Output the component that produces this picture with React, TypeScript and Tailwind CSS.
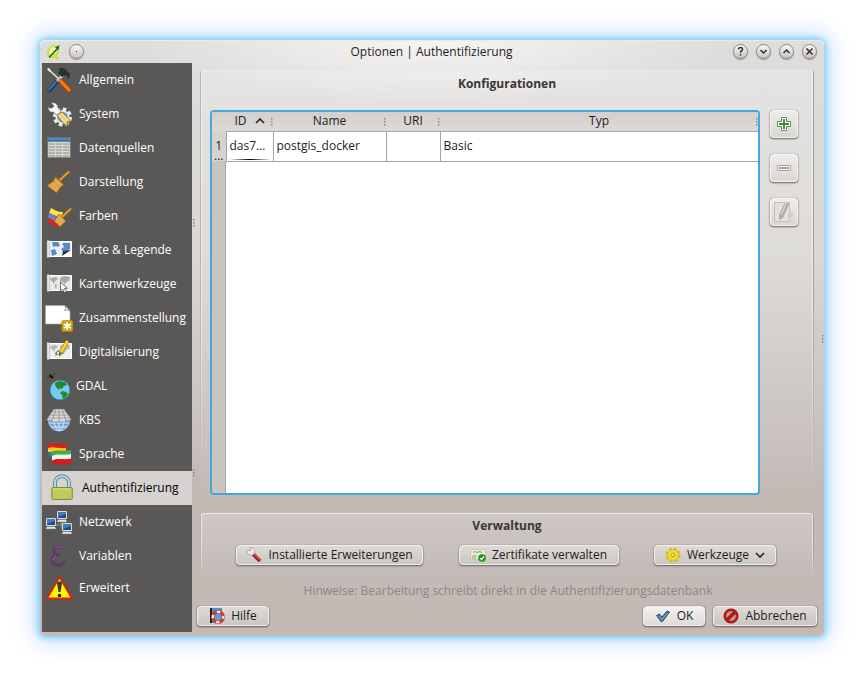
import type { ReactNode } from "react";
import clsx from "clsx";

type Section = {
  label: string;
  icon: ReactNode;
  width?: string;
  viewBox?: string;
};

const mapLand = "M6 8l5-1 2 2-3 2-1 3-2-3-2-1zM10 14l2 1-1 4-1-2zM15 8l4-2 6 1-1 4-3 1-1 3-2-3-3-1z";

function Sheet({ fill, land }: { fill: string; land: string }) {
  return (
    <>
      <path d="M4 5.5h22.5v15H4z" fill={fill} stroke="#fff" />
      <path d={mapLand} fill={land} />
      <path d="M2 4.5h2.5v17H2z" fill="#e8e8e8" stroke="#9a9a9a" strokeWidth=".5" />
    </>
  );
}

function Monitor({ x, y }: { x: number; y: number }) {
  return (
    <g transform={`translate(${x} ${y})`}>
      <path d="M.5.5h9v7h-9z" fill="#1f4b93" stroke="#d8dcd8" />
      <path d="M1 1h8v2L1 6z" fill="#4b78b9" />
      <path d="M1 8.5h8l1.2 2.6H-.2z" fill="#dfe2dc" stroke="#777" strokeWidth=".5" />
    </g>
  );
}

function Broom() {
  return (
    <>
      <path d="M15 12L23.5 4" stroke="#a86613" strokeWidth="3" strokeLinecap="round" />
      <path d="M15 12L23.5 4" stroke="#eaa74a" strokeWidth="1.6" strokeLinecap="round" />
      <path d="M10.5 9l8.5 8-2.5 1-5 7L2 17.5l6-4z" fill="#e0a045" stroke="#9b6216" strokeWidth=".8" />
      <path d="M10 12l6 6M7 15l6 6M4.5 17l7 6" stroke="#f3c47c" strokeWidth=".8" />
    </>
  );
}

const sections: Section[] = [
  {
    label: "Allgemein",
    icon: (
      <>
        <path d="M12 16L4.5 24" stroke="#1d3f73" strokeWidth="4.6" strokeLinecap="round" />
        <path d="M11 16L4 23.5" stroke="#4c7cbd" strokeWidth="1.5" strokeLinecap="round" />
        <path d="M3 3l12 11" stroke="#e4e4e4" strokeWidth="1.6" />
        <path d="M2 3l2-1 2 3-1 1z" fill="#fff" />
        <path d="M12 15l6-6" stroke="#c8c8c8" strokeWidth="3" />
        <path d="M13 3c4-2 7-1 9 2l3 3-1 5-2-2-1-2-4 2-4-4 2-2z" fill="#2b3030" />
        <path d="M16 15l8 9" stroke="#b54300" strokeWidth="4.8" strokeLinecap="round" />
        <path d="M15.5 15l8.500 9" stroke="#ff7d0c" strokeWidth="3" strokeLinecap="round" />
      </>
    ),
  },
  {
    label: "System",
    icon: (
      <>
        <circle cx="17.5" cy="17" r="8" fill="none" stroke="#eee" strokeWidth="3" strokeDasharray="3.6 2.683" />
        <circle cx="17.5" cy="17" r="6.2" fill="#6e96c8" stroke="#e8e8e8" strokeWidth="1.8" />
        <path d="M3 7c3 2 5 1 6-1L6 3c4-1 7 1 7 5l3 4-4 3-4-3c-3 1-5-2-5-5z" fill="#f5f5f5" stroke="#444" strokeWidth=".5" />
        <path d="M12 15l5-3 8 8-1 5-5-1z" fill="#ead37b" stroke="#8d7834" strokeWidth=".8" />
        <path d="M14 16l8 8M17 14l6 6" stroke="#fbeeb1" strokeWidth=".8" />
        <circle cx="22.8" cy="22.5" r=".9" fill="#594b20" />
      </>
    ),
  },
  {
    label: "Datenquellen",
    icon: (
      <>
        <path d="M2.8 3.5h22.5v20H2.8z" fill="#d5d8cf" stroke="#777" strokeWidth=".6" />
        <path d="M3 3.5h22v4.200H3z" fill="#3c69a6" />
        <path d="M3 5h22" stroke="#7ca0d1" />
        <path d="M4 10h20M4 13h20M4 16h20M4 19h20M4 22h20" stroke="#878b84" strokeWidth=".9" strokeDasharray="6 1" />
      </>
    ),
  },
  { label: "Darstellung", icon: <Broom /> },
  {
    label: "Farben",
    icon: (
      <>
        <path d="M6 6c4 2 6 4 12 4l-2 6L4 11z" fill="#ffe43b" />
        <path d="M4 11c5 1 6 5 12 4l-1 5C9 20 7 17 3 16z" fill="#5c86ce" />
        <path d="M3 16c4 1 7 4 12 3l-2 6C9 25 7 21 2 20z" fill="#e12423" />
        <path d="M17 15l8.500-8" stroke="#a86613" strokeWidth="2.8" strokeLinecap="round" />
        <path d="M17 15l8.500-8" stroke="#eaa74a" strokeWidth="1.4" strokeLinecap="round" />
        <path d="M14 12l7 7-6 6-6-6z" fill="#dfa04c" stroke="#9b6216" strokeWidth=".8" />
        <path d="M13 15l5 5M11 17l5 5" stroke="#f3c47c" strokeWidth=".8" />
      </>
    ),
  },
  {
    label: "Karte & Legende",
    icon: (
      <>
        <path d="M4 5.5h22.5v15H4z" fill="#e9eff5" stroke="#fff" />
        <path d="M7 6h6l2 3-2 2-2-1-3 1zM6 14l4-1 2 5-5 2zM17 7h8v6l-3 2-4 1-2-3 3-2z" fill="#5b88c4" />
        <path d="M26 14v6h-9z" fill="#fff" />
        <path d="M17 20l1-5 8-1z" fill="#30353a" />
        <path d="M2 4.5h2.500v17H2z" fill="#e8e8e8" stroke="#9a9a9a" strokeWidth=".5" />
      </>
    ),
  },
  {
    label: "Kartenwerkzeuge",
    icon: (
      <>
        <Sheet fill="#e9e9e4" land="#a9aaa5" />
        <path d="M15.5 12v9l2.200-2 1.800 4 1.800-.9-1.800-3.700h2.800z" fill="#fff" stroke="#333" strokeWidth=".7" />
      </>
    ),
  },
  {
    label: "Zusammenstellung",
    icon: (
      <>
        <path d="M.5 1.500H20l5 5V20H.500z" fill="#fff" stroke="#aaa" strokeWidth=".6" />
        <path d="M20 1.500c1 2 .5 3.500-.5 5 2-.8 4-.5 5.500.5z" fill="#eee" stroke="#666" strokeWidth=".6" />
        <rect x="16.8" y="16.5" width="11" height="11" rx="1.5" fill="#d1a50d" stroke="#a98508" strokeWidth=".6" />
        <path d="M22.300 18v8M18.800 20l7 4M25.800 20l-7 4" stroke="#fff" strokeWidth="1.5" />
      </>
    ),
  },
  {
    label: "Digitalisierung",
    icon: (
      <>
        <Sheet fill="#eeeeea" land="#b5b6b1" />
        <path d="M13 16c-2 2-3-2 0-3s3 3 6 2" fill="none" stroke="#555" />
        <path d="M15.500 15l7-12" stroke="#a58a0c" strokeWidth="4" />
        <path d="M16 14l6.500-11" stroke="#fad62f" strokeWidth="2.5" />
        <path d="M13.800 14l3.400 2-3.200 2.300z" fill="#555" />
      </>
    ),
  },
  {
    label: "GDAL",
    width: "w-[25px]",
    viewBox: "0 0 25 28",
    icon: (
      <>
        <path d="M6 5l3 9 5-4" fill="none" stroke="#bd3838" />
        <circle cx="15" cy="18" r="9.8" fill="#76c9ef" stroke="#3c8fb8" strokeWidth=".6" />
        <path d="M10 11l4-2 6 1 2 3-3 1-2 3-2-1-1 2-3-3-1-2zM17 19l4 1 2 2-3 4-2 1-1-4-2-2z" fill="#248a2c" />
        <path d="M1.500 7l3-2M8 3l3-2" stroke="#45484a" strokeWidth="2" />
        <path d="M4.500 3l3.500 3" stroke="#171717" strokeWidth="2.6" />
      </>
    ),
  },
  {
    label: "KBS",
    icon: (
      <>
        <circle cx="14" cy="14.5" r="10.5" fill="#6fa5dd" stroke="#bcdcf8" strokeWidth=".8" />
        <path d="M4 17h20M6 21h16M14 14v11M9 14c0 5 2 8 4 11M19 14c0 5-2 8-4 11" fill="none" stroke="#dff0ff" strokeWidth=".9" />
        <path d="M9 3h10l7.500 11-4 .5-3 1.500h-11l-3-1.500-4-.5z" fill="#d9dad8" stroke="#777" strokeWidth=".6" />
        <path d="M7.500 6h13M5.500 9h17M3.500 12h21M11 3L7 15M14 3v13M17 3l4 12" stroke="#83878b" strokeWidth=".7" />
      </>
    ),
  },
  {
    label: "Sprache",
    icon: (
      <>
        <path d="M2 4c7-2 11 1 20 0v5c-9 1-13-2-19 0z" fill="#df1d1d" />
        <path d="M3 8c6-2 9 1 18 0v4H3z" fill="#ffc928" />
        <path d="M3 12h8v5c-3-1-5-1-7 0z" fill="#3d69b2" />
        <path d="M6 12c7-3 12 0 20-2v5c-8 2-13-1-19 2z" fill="#3fb03a" />
        <path d="M7 16c6-3 11 0 19-2v5c-8 2-12-1-19 2z" fill="#f7f7f7" />
        <path d="M7 20.500c7-3 11 0 19-2V24c-8 2-12-1-19 1z" fill="#d61b1b" />
      </>
    ),
  },
  {
    label: "Authentifizierung",
    width: "w-[31px]",
    viewBox: "0 0 31 28",
    icon: (
      <>
        <path d="M10 15V9c0-9 14-9 14 0v6" fill="none" stroke="#658a9b" strokeWidth="4" />
        <path d="M10 15V9c0-9 14-9 14 0v6" fill="none" stroke="#bad8e4" strokeWidth="2" />
        <rect x="6.8" y="13.5" width="20.5" height="12" rx="1.5" fill="#bdcb5c" stroke="#828e2d" />
        <path d="M8 15h18" stroke="#d4df88" />
      </>
    ),
  },
  {
    label: "Netzwerk",
    icon: (
      <>
        <path d="M8 17h9v4M16 12v5" fill="none" stroke="#949494" />
        <Monitor x={12} y={3} />
        <Monitor x={1} y={10} />
        <Monitor x={17} y={15} />
      </>
    ),
  },
  {
    label: "Variablen",
    icon: (
      <>
        <path d="M19 8.500c-1-4.500-10-4.500-10 .5 0 3 2 4 6 4-5 0-8 2-8 5.500 0 6 10 6 13 1" fill="none" stroke="#5d3768" strokeWidth="2.8" />
        <path d="M18 6c-3-2-7-1-8 1M8 18c0-2 1-3 3-4" fill="none" stroke="#9b7aa5" strokeWidth=".8" />
        <circle cx="18.5" cy="8" r="1.8" fill="#6c4477" />
      </>
    ),
  },
  {
    label: "Erweitert",
    icon: (
      <>
        <path d="M14.500 3L27 24.500H2z" fill="#fff800" stroke="#df1f12" strokeWidth="1.8" strokeLinejoin="round" />
        <path d="M12 9c0-2 5-2 5 0l-1.500 9h-2z" fill="#3b3d35" />
        <circle cx="14.5" cy="21.5" r="1.7" fill="#111" />
      </>
    ),
  },
];

function Sidebar() {
  return (
    <nav className="w-[150px] shrink-0 bg-[#595856] text-white">
      {sections.map(({ label, icon, width = "w-[28px]", viewBox = "0 0 28 28" }, i) => (
        <button
          key={label}
          className={clsx(
            "flex w-full items-center gap-[6px] pl-[3px] text-left leading-[20px]",
            i === sections.length - 1 ? "h-[30px]" : "h-[34px]",
            label === "Authentifizierung" && "bg-[#d6d2cf] text-black",
          )}
        >
          <svg viewBox={viewBox} className={clsx("h-[28px] shrink-0", width)}>
            {icon}
          </svg>
          {label}
        </button>
      ))}
    </nav>
  );
}

function TitleButton({ label, children }: { label: string; children?: ReactNode }) {
  return (
    <button
      aria-label={label}
      className="grid size-[15px] place-items-center rounded-full border border-[#8d8a88] bg-linear-to-b from-[#f8f8f7] to-[#c8c4c1] shadow-[0_1px_1px_#9a9694]"
    >
      <svg viewBox="0 0 13 13" className="size-[13px]" fill="none" stroke="#333" strokeWidth="1.5">
        {children}
      </svg>
    </button>
  );
}

function TitleBar() {
  return (
    <header className="flex h-[22px] shrink-0 items-center pr-[7px] pb-px pl-1">
      <div className="flex flex-1 items-center gap-[7px]">
        <svg viewBox="0 0 16 16" className="size-4">
          <path d="M8 2C4 2 2 6 2 9c0 4 4 5 7 3s5-10-1-10z" fill="#f0f5b0" stroke="#cfdd45" strokeWidth="2.2" />
          <path d="M8 10c1 3 2 5 5 4" fill="none" stroke="#cfdd45" strokeWidth="2.2" />
          <path d="M3 13.500L12 4" stroke="#176b20" strokeWidth="1.6" />
          <path d="M9 3.500L13.500 1l-1 5z" fill="#176b20" />
        </svg>
        <TitleButton label="Menü">
          <path d="M6 6.500h1" strokeWidth="1" />
        </TitleButton>
      </div>
      <h1>Optionen | Authentifizierung</h1>
      <div className="flex flex-1 items-center justify-end gap-2">
        <TitleButton label="Hilfe">
          <path d="M4.500 4.500c0-3 4.500-2.500 4 0-.3 1.200-2 1.400-2 3.300M6.500 9v1.500" />
        </TitleButton>
        <TitleButton label="Minimieren">
          <path d="M3.500 5l3 3 3-3" />
        </TitleButton>
        <TitleButton label="Maximieren">
          <path d="M3.500 8l3-3 3 3" />
        </TitleButton>
        <TitleButton label="Schließen">
          <path d="M3.500 3.500l6 6m0-6l-6 6" />
        </TitleButton>
      </div>
    </header>
  );
}

function PushButton({ children, className }: { children: ReactNode; className?: string }) {
  return (
    <button
      className={clsx(
        "flex h-[20px] items-center justify-center gap-[6px] rounded-[4px] border border-[#f1efed] bg-linear-to-b from-[#dedbd7] to-[#cac6c0] text-[#1f1c1b] shadow-[0_1px_2px_#65605d,0_0_1px_#65605d]",
        className,
      )}
    >
      {children}
    </button>
  );
}

function ToolButton({ label, disabled, children }: { label: string; disabled?: boolean; children: ReactNode }) {
  return (
    <button
      aria-label={label}
      disabled={disabled}
      className="grid size-[28px] place-items-center rounded-[4px] border border-[#f7f6f5] bg-linear-to-b from-[#eeedec] to-[#dad6d2] shadow-[0_1px_2px_#65605d,0_0_1px_#65605d]"
    >
      <svg viewBox="0 0 20 20" className="size-[20px]" fill="none">
        {children}
      </svg>
    </button>
  );
}

function Grip({ className }: { className?: string }) {
  return (
    <svg viewBox="0 0 2 8" className={clsx("h-2 w-[2px]", className)} fill="#8b8683">
      <path d="M0 0h1.500v1.500H0zM0 3h1.500v1.500H0zM0 6h1.500v1.500H0z" />
    </svg>
  );
}

// group frame whose side edges fade out towards the bottom
function GroupBox({ title, className, children }: { title: string; className?: string; children: ReactNode }) {
  return (
    <section className={clsx("relative flex flex-col rounded-t-[5px] border-t border-[#eceae8] bg-linear-to-b from-white/20 to-transparent", className)}>
      <div className="absolute inset-y-0 left-0 w-px rounded-tl-[5px] bg-linear-to-b from-[#b5b0ad] via-[#b5b0ad] to-transparent" />
      <div className="absolute inset-y-0 left-px w-px bg-linear-to-b from-white/60 via-white/60 to-transparent" />
      <div className="absolute inset-y-0 right-0 w-px bg-linear-to-b from-[#a19b98] via-[#a19b98] to-transparent" />
      <div className="absolute inset-y-0 right-px w-px bg-linear-to-b from-white/60 via-white/60 to-transparent" />
      <h2 className="text-center font-bold text-[#3a3735]">{title}</h2>
      {children}
    </section>
  );
}

const columns = ["Name", "URI", "Typ"];

function ConfigTable() {
  return (
    <div className="flex flex-1 flex-col rounded-[4px] border-2 border-[#43a9dc] bg-linear-to-r from-[#c9c4c0] from-[14px] to-white to-[14px]">
      <table className="w-full table-fixed border-collapse">
        <colgroup>
          <col className="w-[14px]" />
          <col className="w-[47px]" />
          <col className="w-[113px]" />
          <col className="w-[54px]" />
          <col />
        </colgroup>
        <thead className="bg-linear-to-b from-[#d2cfcc] to-[#dcd9d6]">
          <tr className="h-[19px]">
            <th />
            <th className="relative font-normal">
              <span className="flex items-center justify-center gap-2">
                ID
                <svg viewBox="0 0 10 6" className="h-[6px] w-[10px]" fill="none" stroke="#222" strokeWidth="1.6">
                  <path d="M1 5l4-4 4 4" />
                </svg>
              </span>
              <Grip className="absolute top-[6px] right-0" />
            </th>
            {columns.map((name) => (
              <th key={name} className="relative font-normal">
                {name}
                <Grip className="absolute top-[6px] right-0" />
              </th>
            ))}
          </tr>
        </thead>
        <tbody>
          <tr className="h-[30px]">
            <th className="border-r border-[#aaa5a2] bg-[#d5d2cf] align-bottom leading-[10px] font-normal whitespace-pre-line">
              {"1\n…"}
            </th>
            <td className="relative border border-[#aaa5a2] bg-white px-[3px]">
              das7…
              <span className="absolute inset-x-[2px] bottom-px h-px bg-linear-to-r from-transparent via-black to-transparent" />
            </td>
            <td className="border border-[#aaa5a2] bg-white px-[3px]">postgis_docker</td>
            <td className="border border-[#aaa5a2] bg-white px-[3px]" />
            <td className="border-y border-[#aaa5a2] bg-white px-[3px]">Basic</td>
          </tr>
        </tbody>
      </table>
      <div className="ml-[13px] flex-1 border-l border-[#aaa5a2]" />
    </div>
  );
}

function Management() {
  return (
    <div className="mt-[10px] flex justify-between pr-[38px] pl-[36px]">
      <PushButton className="w-[187px]">
        <svg viewBox="0 0 16 16" className="size-4">
          <path d="M6 6l8 8" stroke="#9e1820" strokeWidth="3.5" />
          <path d="M7 6l7 7" stroke="#ea5154" strokeWidth="1.2" />
          <path d="M1 3l3 1 1-1-1-2c3-1 5 1 5 4L7 8C4 9 0 7 1 3z" fill="#e9ebe7" stroke="#888" strokeWidth=".6" />
        </svg>
        Installierte Erweiterungen
      </PushButton>
      <PushButton className="w-[160px]">
        <svg viewBox="0 0 16 16" className="size-4">
          <path d="M.5 2.500h15v10H.500z" fill="#e8ebd7" stroke="#afb39c" strokeWidth=".6" />
          <path d="M3 5.500l2-1 2 1 3-1 2 1M2 9h5M2 11h4" fill="none" stroke="#7d8273" strokeWidth=".8" />
          <circle cx="12" cy="11" r="3.8" fill="#139514" />
          <path d="M10 11l1.500 1.500L14 9.500" fill="none" stroke="#fff" strokeWidth="1.2" />
        </svg>
        Zertifikate verwalten
      </PushButton>
      <PushButton className="w-[122px]">
        <svg viewBox="0 0 16 16" className="size-4">
          <circle cx="8" cy="8" r="6" fill="none" stroke="#dabd14" strokeWidth="3" strokeDasharray="2.7 2.012" />
          <circle cx="8" cy="8" r="5.3" fill="#f4dc2d" stroke="#d5b80d" strokeWidth=".6" />
          <circle cx="8" cy="8" r="1.8" fill="#e2dfc8" stroke="#bfa217" />
        </svg>
        Werkzeuge
        <svg viewBox="0 0 10 6" className="h-[6px] w-[10px]" fill="none" stroke="#222" strokeWidth="1.6">
          <path d="M1 1l4 4 4-4" />
        </svg>
      </PushButton>
    </div>
  );
}

function Footer() {
  return (
    <footer className="mt-[6px] mb-[6px] flex items-center gap-2 pr-[7px] pl-[5px]">
      <PushButton className="mr-auto w-[72px]">
        <svg viewBox="0 0 16 16" className="size-4">
          <path d="M1 0h12v14l-2 1H1z" fill="#4b91d1" />
          <path d="M1 0h2v15H1z" fill="#202020" />
          <circle cx="9" cy="9" r="5.2" fill="#5b9bd6" stroke="#d03a28" strokeWidth="3.4" />
          <circle cx="9" cy="9" r="5.2" fill="none" stroke="#f8f4f0" strokeWidth="2.2" strokeDasharray="3.4 4.768" strokeDashoffset="1.7" />
        </svg>
        Hilfe
      </PushButton>
      <PushButton className="w-[62px] from-[#f3f2f1] to-[#dedbd7]">
        <svg viewBox="0 0 16 16" className="size-4">
          <path d="M1.500 7.500l3-1.500 2.500 3 5-6 2.500 1-7 9.500H6z" fill="#507ba3" stroke="#294a6b" />
          <path d="M3.500 8l3.500 3.500L12.500 5" fill="none" stroke="#83a9ca" />
        </svg>
        OK
      </PushButton>
      <PushButton className="w-[104px]">
        <svg viewBox="0 0 16 16" className="size-4">
          <circle cx="8" cy="8" r="6" fill="none" stroke="#8d0f0f" strokeWidth="3" />
          <circle cx="8" cy="8" r="5.8" fill="#b5a5a0" stroke="#c61b18" strokeWidth="2" />
          <path d="M4 12l8-8" stroke="#b01614" strokeWidth="3.4" />
        </svg>
        Abbrechen
      </PushButton>
    </footer>
  );
}

export default function App() {
  return (
    <div className="flex h-screen min-h-[640px] bg-white p-10 font-['Open_Sans',sans-serif] text-[12px] leading-[18px] text-[#1f1c1b]">
      <main className="flex flex-1 flex-col rounded-[5px] border-t border-[#eceae9] bg-[radial-gradient(ellipse_300px_64px_at_50%_0,#f6f5f4,transparent),linear-gradient(#dedddb,#dad7d4_35%,#c3bab6_75%,#c3bab6)] pb-1 pl-[2px] shadow-[0_0_7px_2px_#7accf6,0_0_24px_7px_#cfe3ff]">
        <TitleBar />
        <div className="flex flex-1">
          <Sidebar />
          <div className="relative flex min-w-0 flex-1 flex-col">
            <Grip className="absolute top-[156px] left-px" />
            <Grip className="absolute top-[406px] left-px" />
            <Grip className="absolute top-[272px] right-0" />
            <GroupBox title="Konfigurationen" className="mt-[7px] mr-[10px] ml-[8px] flex-1 pt-[4px] pb-[8px]">
              <div className="mt-[17px] flex flex-1 gap-[10px] pr-[16px] pl-[10px]">
                <ConfigTable />
                <div className="flex flex-col gap-4">
                  <ToolButton label="Hinzufügen">
                    <path d="M7.500 3.500h5v4h4v5h-4v4h-5v-4h-4v-5h4z" fill="#fff" stroke="#5a965a" />
                    <path d="M9 5h2v4h4v2h-4v4H9v-4H5V9h4z" fill="#4a8a4a" />
                  </ToolButton>
                  <ToolButton label="Entfernen" disabled>
                    <path d="M3.500 7.500h13v5h-13z" fill="#f4f3f2" stroke="#aaa6a3" />
                    <path d="M5 9h10v2H5z" fill="#aaa6a3" />
                  </ToolButton>
                  <ToolButton label="Bearbeiten" disabled>
                    <path d="M.5.500h15v19H.500z" fill="#e3e0dd" stroke="#c3bfbb" />
                    <path d="M14 11c7-3 7 5 0 5" fill="#cfcbc8" />
                    <path d="M5 13L10 2l5-1-1 4-5 11-4 2z" fill="#aeaba8" />
                    <path d="M7 13l5-11" stroke="#d4d1ce" strokeWidth="1.5" />
                  </ToolButton>
                </div>
              </div>
            </GroupBox>
            <GroupBox title="Verwaltung" className="mt-[10px] mr-[10px] ml-[8px] h-[64px] pt-[3px]">
              <Management />
            </GroupBox>
            <p className="mt-[5px] text-center text-[#8b8785]">
              Hinweise: Bearbeitung schreibt direkt in die Authentifizierungsdatenbank
            </p>
            <Footer />
          </div>
        </div>
      </main>
    </div>
  );
}
